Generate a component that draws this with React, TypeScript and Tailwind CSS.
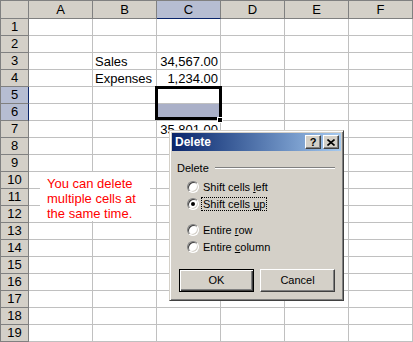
import React from 'react';

const COLS = ['A', 'B', 'C', 'D', 'E', 'F'];
const ROWS = Array.from({ length: 19 }, (_, i) => i + 1);

const cells: Record<string, { text: string; right?: boolean }> = {
    B3: { text: 'Sales' },
    C3: { text: '34,567.00', right: true },
    B4: { text: 'Expenses' },
    C4: { text: '1,234.00', right: true },
    C7: { text: '35,801.00', right: true },
};

const Radio: React.FC<{ checked?: boolean; focus?: boolean; children: React.ReactNode }> = ({ checked, focus, children }) => (
    <div className="flex items-center h-[17px] gap-[2px]">
        <div className="relative w-[12px] h-[12px] rounded-full bg-white border border-t-[#808080] border-l-[#808080] border-r-white border-b-white shadow-[inset_1px_1px_0_#404040,inset_-1px_-1px_0_#d4d0c8]">
            {checked && <div className="absolute left-[3px] top-[3px] w-[4px] h-[4px] rounded-full bg-black" />}
        </div>
        <span
            className={
                'px-[1px] leading-[12px] border border-dotted ' + (focus ? 'border-black' : 'border-transparent')
            }
        >
            {children}
        </span>
    </div>
);

const TitleButton: React.FC<{ children: React.ReactNode }> = ({ children }) => (
    <div className="w-[16px] h-[14px] flex items-center justify-center bg-[#d4d0c8] border border-t-white border-l-white border-r-[#404040] border-b-[#404040] shadow-[inset_-1px_-1px_0_#808080] text-black">
        {children}
    </div>
);

const App: React.FC = () => {
    return (
        <div className="relative w-[413px] h-[342px] overflow-hidden bg-white font-['Liberation_Sans',Arial,sans-serif] text-black">
            <div className="grid grid-cols-[29px_repeat(6,64px)] grid-rows-[19px_repeat(19,17px)]">
                <div className="bg-[#d4d0c8] border-t border-l border-r border-b border-[#808080]" />
                {COLS.map(c => (
                    <div
                        key={c}
                        className={
                            c === 'C'
                                ? 'flex items-center justify-center text-[13px] bg-[#b6bdd2] border-t border-r border-b border-t-[#808080] border-r-[#808080] border-b-[#0a246a]'
                                : 'flex items-center justify-center text-[13px] bg-[#d4d0c8] border-t border-r border-b border-[#808080]'
                        }
                    >
                        {c}
                    </div>
                ))}
                {ROWS.map(r => (
                    <React.Fragment key={r}>
                        <div
                            className={
                                r === 5 || r === 6
                                    ? 'flex items-center justify-center text-[13px] bg-[#b6bdd2] border-l border-r border-b border-l-[#808080] border-b-[#808080] border-r-[#0a246a]'
                                    : 'flex items-center justify-center text-[13px] bg-[#d4d0c8] border-l border-r border-b border-[#808080]'
                            }
                        >
                            {r}
                        </div>
                        {COLS.map(c => {
                            const cell = cells[c + r];
                            return (
                                <div
                                    key={c}
                                    className={
                                        'flex items-center px-[2px] text-[13px] leading-[15px] whitespace-nowrap border-r border-b border-[#c0c0c0] ' +
                                        (c === 'C' && r === 6 ? 'bg-[#aab0c8] ' : 'bg-white ') +
                                        (cell?.right ? 'justify-end' : 'justify-start')
                                    }
                                >
                                    {cell?.text}
                                </div>
                            );
                        })}
                    </React.Fragment>
                ))}
            </div>

            {/* selection frame + fill handle */}
            <div className="absolute left-[155px] top-[86px] w-[67px] h-[34px] border-[3px] border-black" />
            <div className="absolute left-[217px] top-[117px] w-[6px] h-[6px] bg-black border border-white" />

            {/* note */}
            <div className="absolute left-[40px] top-[172px] w-[110px] h-[49px] bg-white pl-[7px] pt-[4px] text-[13px] leading-[15px] text-[#ff0000]">
                <div>You can delete</div>
                <div>multiple cells at</div>
                <div>the same time.</div>
            </div>

            {/* Delete dialog */}
            <div className="absolute left-[169px] top-[130px] w-[175px] h-[171px] flex flex-col p-[2px] bg-[#d4d0c8] border border-t-[#d4d0c8] border-l-[#d4d0c8] border-r-[#404040] border-b-[#404040] shadow-[inset_1px_1px_0_#fff,inset_-1px_-1px_0_#808080] text-[11px]">
                <div className="flex items-center h-[18px] pl-[3px] pr-[2px] gap-[2px] bg-linear-to-r from-[#0a246a] to-[#a6caf0]">
                    <span className="flex-1 text-[12px] font-bold text-white">Delete</span>
                    <TitleButton>
                        <span className="text-[11px] font-bold leading-none">?</span>
                    </TitleButton>
                    <TitleButton>
                        <svg width="8" height="7" viewBox="0 0 8 7">
                            <path d="M0.5 0.5 L7.5 6.5 M7.5 0.5 L0.5 6.5" stroke="#000" strokeWidth="1.6" fill="none" />
                        </svg>
                    </TitleButton>
                </div>
                <div className="flex flex-col px-[5px]">
                    <div className="flex items-center h-[14px] mt-[10px]">
                        <span>Delete</span>
                        <div className="flex-1 ml-[6px] mr-[1px] h-[2px] border-t border-b border-t-[#808080] border-b-white" />
                    </div>
                    <div className="flex flex-col pl-[10px] mt-[3px]">
                        <Radio>
                            Shift cells <span className="underline">l</span>eft
                        </Radio>
                        <Radio checked focus>
                            Shift cells <span className="underline">u</span>p
                        </Radio>
                        <div className="h-[9px]" />
                        <Radio>
                            Entire <span className="underline">r</span>ow
                        </Radio>
                        <Radio>
                            Entire <span className="underline">c</span>olumn
                        </Radio>
                    </div>
                    <div className="flex gap-[6px] pl-[2px] mt-[14px]">
                        <button className="w-[75px] h-[23px] flex items-center justify-center bg-[#d4d0c8] border border-black shadow-[inset_1px_1px_0_#fff,inset_-1px_-1px_0_#404040,inset_-2px_-2px_0_#808080]">
                            OK
                        </button>
                        <button className="w-[75px] h-[23px] flex items-center justify-center bg-[#d4d0c8] border border-t-white border-l-white border-r-[#404040] border-b-[#404040] shadow-[inset_-1px_-1px_0_#808080]">
                            Cancel
                        </button>
                    </div>
                </div>
            </div>
        </div>
    );
};

export default App;
